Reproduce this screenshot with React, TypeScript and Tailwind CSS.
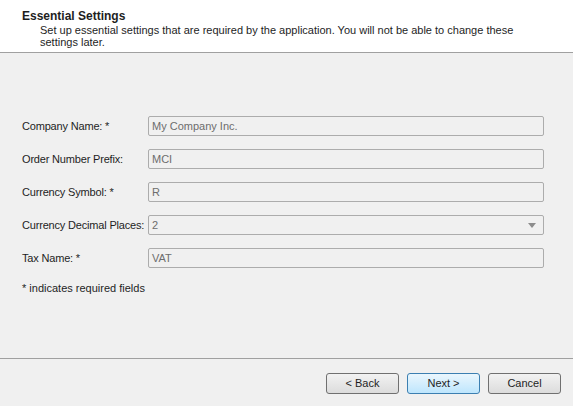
const fields = [
  { label: "Company Name: *", value: "My Company Inc." },
  { label: "Order Number Prefix:", value: "MCI" },
  { label: "Currency Symbol: *", value: "R" },
  { label: "Currency Decimal Places:", value: "2", select: true },
  { label: "Tax Name: *", value: "VAT" },
];

export default function App() {
  return (
    <div
      className="w-[573px] h-[406px] bg-[#f0f0f0] flex flex-col text-[12px] text-[#1e1e1e]"
      style={{ fontFamily: '"Segoe UI", "Liberation Sans", Arial, sans-serif' }}
    >
      {/* Header */}
      <div className="h-[53px] bg-white border-b border-[#a0a0a0] pl-[22px] pt-[9px] pr-[50px]">
        <div className="font-bold leading-[15px]">Essential Settings</div>
        <div className="pl-[18px] leading-[12px] text-[11px]">
          Set up essential settings that are required by the application. You will not be able to change these
          settings later.
        </div>
      </div>

      {/* Form */}
      <div className="flex-1 pl-[22px] pr-[29px] pt-[63px]">
        <div className="flex flex-col gap-[13px]">
          {fields.map((f) => (
            <div key={f.label} className="flex items-center h-[20px]">
              <div className="w-[126px] text-[11px] whitespace-nowrap tracking-[-0.18px]">{f.label}</div>
              <div className="flex-1 h-[20px] border border-[#acacac] rounded-[2px] bg-[#f0f0f0] flex items-center pl-[3px] pr-[7px] text-[11px] text-[#6d6d6d]">
                <span className="flex-1">{f.value}</span>
                {f.select && (
                  <svg width="8" height="5" viewBox="0 0 8 5">
                    <path d="M0 0 L8 0 L4 5 Z" fill="#8c8c8c" />
                  </svg>
                )}
              </div>
            </div>
          ))}
        </div>
        <div className="mt-[12px] text-[11px]">* indicates required fields</div>
      </div>

      {/* Footer */}
      <div className="h-[48px] border-t border-[#a0a0a0] flex items-start justify-end gap-[8px] pr-[12px] pt-[14px]">
        <button className="w-[73px] h-[21px] border border-[#707070] rounded-[3px] bg-gradient-to-b from-[#f2f2f2] to-[#dcdcdc] text-[11px]">
          &lt; Back
        </button>
        <button className="w-[73px] h-[21px] border border-[#3c7fb1] rounded-[3px] bg-gradient-to-b from-[#eaf6fd] to-[#bee6fd] text-[11px]">
          Next &gt;
        </button>
        <button className="w-[73px] h-[21px] border border-[#707070] rounded-[3px] bg-gradient-to-b from-[#f2f2f2] to-[#dcdcdc] text-[11px]">
          Cancel
        </button>
      </div>
    </div>
  );
}
